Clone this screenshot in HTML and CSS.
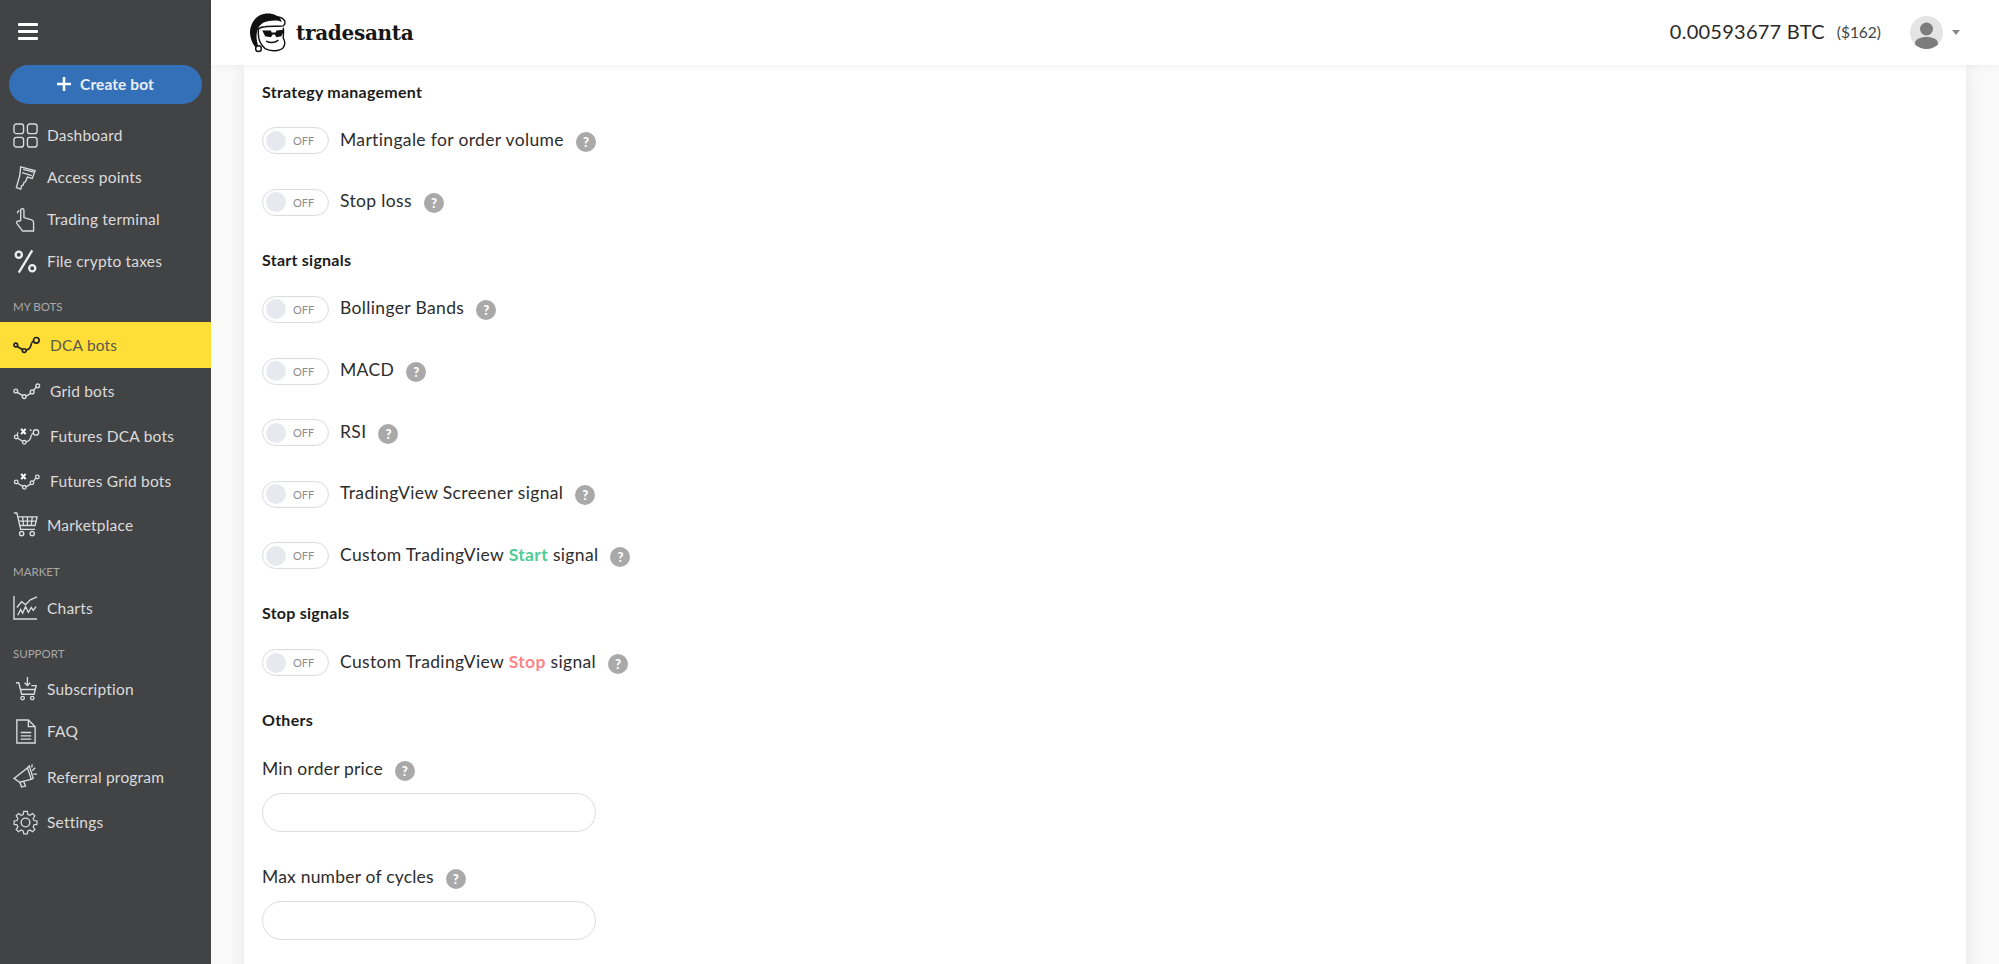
FILE: index.html
```html
<!DOCTYPE html>
<html lang="en">
<head>
<meta charset="utf-8">
<title>TradeSanta</title>
<link rel="stylesheet" href="styles.css">
</head>
<body>
<div class="app">
  <aside class="sidebar">
    <button class="burger" aria-label="Menu"><span></span><span></span><span></span></button>
    <a class="create"><svg class="plus" viewBox="0 0 14 14"><path d="M7 0v14M0 7h14"/></svg>Create bot</a>
    <nav class="nav">
      <a class="item i1"><svg class="ic" viewBox="0 0 26 26"><rect x="1" y="1" width="10" height="10" rx="2.5"/><rect x="15" y="1" width="10" height="10" rx="2.5"/><rect x="1" y="15" width="10" height="10" rx="2.5"/><rect x="15" y="15" width="10" height="10" rx="2.5"/></svg>Dashboard</a>
      <a class="item i2"><svg class="ic" viewBox="0 0 26 26"><path d="M8 2l15 4-3 8-5-1.500-2 5-1.500.5-1 3-1.500.5-1 3.500-4.500-1.500 3.500-12.500z"/><path d="M10.500 4.500l11 3M9.500 8l10 3"/></svg>Access points</a>
      <a class="item i3"><svg class="ic" viewBox="0 0 26 26"><path d="M8 14V3.500a1.700 1.700 0 0 1 3.400 0V11l8 2.500c1.500.5 2 1.500 2 3V25H10l-6-8c-1-1.500 1-3.500 2.500-2z"/><path d="M4.500 6.500a5 5 0 0 1 2-3"/></svg>Trading terminal</a>
      <a class="item i4"><svg class="ic thick" viewBox="0 0 26 26"><circle cx="6" cy="6" r="3.200"/><circle cx="20" cy="20" r="3.200"/><path d="M20 1.500L6 24.500"/></svg>File crypto taxes</a>
      <div class="label l1">MY BOTS</div>
      <a class="item bot active"><svg class="ic wide" viewBox="0 0 30 18"><circle cx="3" cy="9" r="2"/><path d="M4.500 10.500l6 3.500"/><circle cx="12" cy="15" r="2"/><path d="M14 14.500c4-1 5-3 6-8"/><circle cx="25" cy="4" r="3"/><path d="M20 6l2-1"/></svg>DCA bots</a>
      <a class="item bot"><svg class="ic wide" viewBox="0 0 30 18"><circle cx="3" cy="9" r="2"/><path d="M4.500 10.500l6 3.500"/><circle cx="12" cy="15" r="2"/><path d="M14 14.500l5-3"/><circle cx="20.500" cy="10" r="2"/><path d="M22 8.500l3-4"/><circle cx="26.500" cy="3.500" r="2"/></svg>Grid bots</a>
      <a class="item bot"><svg class="ic wide" viewBox="0 0 30 20"><circle cx="3" cy="11" r="2"/><path d="M4.500 12.500l6 3.500"/><circle cx="12" cy="17" r="2"/><path d="M14 16.500c4-1 5-3 6-8"/><circle cx="25" cy="6" r="3"/><path d="M20 8l2-1"/><path class="x" d="M8.500 2l5 6M13.500 2l-5 6"/><path d="M4 9l1-3M18 3l2 1"/></svg>Futures DCA bots</a>
      <a class="item bot"><svg class="ic wide" viewBox="0 0 30 20"><circle cx="3" cy="11" r="2"/><path d="M4.500 12.500l6 3.500"/><circle cx="12" cy="17" r="2"/><path d="M14 16.500l5-3"/><circle cx="20.500" cy="12" r="2"/><path d="M22 10.500l3-4"/><circle cx="26.500" cy="5.500" r="2"/><path class="x" d="M8.500 2l5 6M13.500 2l-5 6"/></svg>Futures Grid bots</a>
      <a class="item market"><svg class="ic" viewBox="0 0 26 26"><path d="M1 1h3l4 17h15"/><path d="M5 5h20l-2 9H7M10 5l1 9M15 5v9M20 5l-1 9M6 9.500h18.500"/><circle cx="9" cy="22.500" r="2.200"/><circle cx="20" cy="22.500" r="2.200"/></svg>Marketplace</a>
      <div class="label l2">MARKET</div>
      <a class="item charts"><svg class="ic" viewBox="0 0 26 26"><path d="M1 1v24h24"/><path d="M4 13l5-6 4 3 5-5 7-3"/><path d="M5 21l3-6 2 4 3-7 3 6 3-5 2 3 3-4"/></svg>Charts</a>
      <div class="label l3">SUPPORT</div>
      <a class="item sub"><svg class="ic" viewBox="0 0 26 26"><path d="M3 7h3l3 12h13l2-9H19"/><path d="M15 1v9M12 7l3 3 3-3M8 14h15"/><circle cx="10" cy="23" r="1.800"/><circle cx="20" cy="23" r="1.800"/></svg>Subscription</a>
      <a class="item faq"><svg class="ic" viewBox="0 0 26 26"><path d="M4 1h12l7 7v17H4z"/><path d="M16 1v7h7M8 14h11M8 17.500h11M8 21h11"/></svg>FAQ</a>
      <a class="item ref"><svg class="ic" viewBox="0 0 26 26"><path d="M1 15L15 4l4 12-12 3z"/><path d="M7 19l2 5 4-1-2-5M15 4l2-2 4 13-2 1"/><path d="M20 7l3-3M21 10.500h4M19.500 3.500l.5-3"/></svg>Referral program</a>
      <a class="item set"><svg class="ic" viewBox="0 0 26 26"><circle cx="13" cy="13" r="4.500"/><path d="M11 1h4l.7 3.500 2.300 1 3-2 2.700 2.700-2 3 1 2.300L26 12v4l-3.300.5-1 2.300 2 3-2.700 2.700-3-2-2.300 1L15 27h-4l-.7-3.500-2.300-1-3 2-2.700-2.700 2-3-1-2.300L0 16v-4l3.300-.5 1-2.300-2-3L5 3.500l3 2 2.300-1z" transform="translate(1.200 .6) scale(.91 .9)"/></svg>Settings</a>
    </nav>
  </aside>
  <div class="main">
    <header class="topbar">
      <div class="brand">
        <svg class="santa" viewBox="0 0 40 42">
          <path class="hat" d="M22 1C10 0 2 8 1 20c0 6 2 12 6 17l3-1c-2-6-3-12-1-18 2-5 6-8 12-9 5-1 10-1 13 1 1-4-5-8-12-9z"/>
          <circle class="bob" cx="10" cy="38" r="3"/>
          <path class="line" d="M10 18c-1 8 1 15 7 20 5 3 15 3 19-1 2-3 2-7 0-10 0-4 1-7 0-11"/>
          <path class="line" d="M21 6c5-2 13-2 15 1 3 2 2 6 0 7-5 1-13 0-19 1-4 0-7 2-8 3"/>
          <path class="hat" d="M14 19l9 0 1 2 4 0 1-2 7-1 0 3-2 4-5 1-2-3-2 0-2 3-6-1-2-4z"/>
          <path class="line" d="M18 30c4 2 9 2 13-1"/>
        </svg>
        <span class="logo">tradesanta</span>
      </div>
      <div class="account">
        <span class="btc">0.00593677 BTC</span>
        <span class="usd">($162)</span>
        <span class="avatar"><svg viewBox="0 0 33 33"><circle cx="16.500" cy="13" r="6.500"/><path d="M5 33v-5c0-5 5-7 11.500-7S28 23 28 28v5z"/></svg></span>
        <span class="caret"></span>
      </div>
    </header>
    <main class="content">
      <section class="card">
        <h3 class="head first">Strategy management</h3>
        <div class="row"><span class="toggle"><i></i><b>OFF</b></span><span class="name">Martingale for order volume</span><span class="help">?</span></div>
        <div class="row"><span class="toggle"><i></i><b>OFF</b></span><span class="name">Stop loss</span><span class="help">?</span></div>
        <h3 class="head">Start signals</h3>
        <div class="row"><span class="toggle"><i></i><b>OFF</b></span><span class="name">Bollinger Bands</span><span class="help">?</span></div>
        <div class="row"><span class="toggle"><i></i><b>OFF</b></span><span class="name">MACD</span><span class="help">?</span></div>
        <div class="row"><span class="toggle"><i></i><b>OFF</b></span><span class="name">RSI</span><span class="help">?</span></div>
        <div class="row"><span class="toggle"><i></i><b>OFF</b></span><span class="name">TradingView Screener signal</span><span class="help">?</span></div>
        <div class="row"><span class="toggle"><i></i><b>OFF</b></span><span class="name">Custom TradingView <em class="go">Start</em> signal</span><span class="help">?</span></div>
        <h3 class="head">Stop signals</h3>
        <div class="row"><span class="toggle"><i></i><b>OFF</b></span><span class="name">Custom TradingView <em class="halt">Stop</em> signal</span><span class="help">?</span></div>
        <h3 class="head">Others</h3>
        <div class="field"><label class="name">Min order price</label><span class="help">?</span></div>
        <input class="input" type="text">
        <div class="field second"><label class="name">Max number of cycles</label><span class="help">?</span></div>
        <input class="input" type="text">
      </section>
    </main>
  </div>
</div>
</body>
</html>
```
FILE: styles.css
```css
* { box-sizing: border-box; }
html, body { margin: 0; height: 100%; overflow: hidden; }
body { font-family: "Lato", "Noto Sans", sans-serif; color: #2b2b2b; background: #fafafa; }
.app { display: flex; height: 964px; overflow: hidden; }

.sidebar { width: 211px; flex: none; background: #424345; color: #dcdcdc; display: flex; flex-direction: column; }
.burger { width: 20px; height: 17px; margin: 23px 0 0 18px; padding: 0; border: 0; background: none; display: flex; flex-direction: column; justify-content: space-between; }
.burger span { display: block; height: 3px; background: #fff; border-radius: 1px; }
.create { margin: 25px 9px 0; height: 39px; padding-bottom: 1px; border-radius: 20px; background: #3470b8; color: #e8eef6; font-size: 15.500px; font-weight: 700; letter-spacing: .1px; display: flex; align-items: center; justify-content: center; gap: 9px; }
.plus { width: 14px; height: 14px; fill: none; stroke: #fff; stroke-width: 2.500; }
.nav { display: flex; flex-direction: column; margin-top: 10px; }
.item { display: flex; align-items: center; height: 42px; padding-left: 13px; font-size: 15.500px; letter-spacing: .2px; color: #dcdcdc; gap: 9px; }
.ic { width: 25px; height: 25px; flex: none; fill: none; stroke: #dcdcdc; stroke-width: 1.400; }
.ic.thick { stroke-width: 2.400; stroke: #eee; }
.ic.wide { width: 28px; height: 18px; stroke-width: 1.500; }
.ic .x { stroke-width: 2.200; stroke: #fff; }
.label { font-size: 11.500px; color: #a9a9aa; padding-left: 13px; height: 16px; line-height: 16px; }
.l1 { margin-top: 17px; }
.l2 { margin-top: 18px; }
.l3 { margin-top: 17px; }
.bot { height: 45.300px; gap: 9px; }
.active { background: #ffdf37; color: #5a5a4c; margin-top: 7px; height: 46px; }
.active .ic { stroke: #222; stroke-width: 1.800; }
.market { height: 42px; margin-top: 0; }
.charts { height: 42px; margin-top: 7px; }
.sub { margin-top: 6px; }
.faq { height: 43px; }
.ref { height: 48px; }
.set { height: 43px; }

.main { flex: 1; min-width: 0; display: flex; flex-direction: column; }
.topbar { height: 65px; flex: none; background: #fff; display: flex; align-items: center; justify-content: space-between; padding: 0 39px 0 38px; box-shadow: 0 2px 8px rgba(0,0,0,.05); position: relative; z-index: 2; }
.brand { display: flex; align-items: center; gap: 9px; }
.santa { width: 38px; height: 41px; }
.santa .hat { fill: #111; }
.santa .bob { fill: #fff; stroke: #111; stroke-width: 1.500; }
.santa .line { fill: none; stroke: #111; stroke-width: 1.500; }
.logo { font-family: "DejaVu Serif", serif; font-weight: 700; font-size: 20px; color: #161616; letter-spacing: -.3px; }
.account { display: flex; align-items: center; }
.btc { font-size: 20px; letter-spacing: .25px; color: #2a2a2a; padding-bottom: 3px; }
.usd { font-size: 15.500px; color: #444; margin-left: 12px; padding-bottom: 1px; }
.avatar { width: 33px; height: 33px; border-radius: 50%; background: #e4e4e4; margin-left: 29px; overflow: hidden; }
.avatar svg { display: block; width: 33px; height: 33px; fill: #7c7c7c; }
.caret { width: 0; height: 0; border: 4.500px solid transparent; border-top: 5px solid #8a8a8a; border-bottom: 0; margin-left: 9px; }

.content { flex: 1; min-height: 0; overflow: hidden; padding: 0 33px; }
.card { background: #fff; height: 1000px; padding: 14px 18px 0; box-shadow: 0 0 18px rgba(0,0,0,.09); }
.head { margin: 13.500px 0 4px; height: 28px; line-height: 28px; font-size: 16px; letter-spacing: .25px; font-weight: 700; color: #1c1c1c; position: relative; top: -1px; }
.head.first { margin-top: 0; margin-bottom: 3px; }
.row { display: flex; align-items: center; height: 61.600px; }
.toggle { width: 67px; height: 27px; border: 1px solid #dcdcdc; border-radius: 14px; display: flex; align-items: center; padding-left: 3px; flex: none; background: #fff; box-shadow: inset 0 0 2px rgba(0,0,0,.05); }
.toggle i { width: 20px; height: 20px; border-radius: 50%; background: #e8e9ef; flex: none; }
.toggle b { font-weight: 400; font-size: 11px; color: #8c8c8c; margin-left: 7px; }
.name { font-size: 17.500px; letter-spacing: .35px; color: #2d2d2d; line-height: 24px; position: relative; top: -1px; }
.row .name { margin-left: 11px; }
.help { width: 20px; height: 20px; border-radius: 50%; background: #a9a9a9; color: #fff; font-size: 13px; font-weight: 900; display: flex; align-items: center; justify-content: center; margin-left: 12px; flex: none; position: relative; top: 1px; }
.go, .halt { font-style: normal; font-weight: 700; }
.go { color: #4fcb94; }
.halt { color: #fb8589; }
.field { display: flex; align-items: center; height: 28px; margin-top: 20.500px; }
.field .name { letter-spacing: .2px; }
.field.second { margin-top: 32px; }
.input { display: block; width: 334px; height: 39px; margin-top: 9px; border: 1px solid #dcdcdc; border-radius: 20px; background: #fff; }
```
